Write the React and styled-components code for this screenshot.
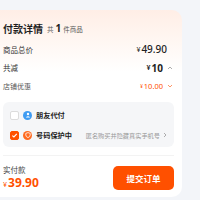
import React from "react";
import styled, { createGlobalStyle } from "styled-components";

const Global = createGlobalStyle`
  html, body { margin: 0; padding: 0; background: #f3f5f9; }
  body { font-family: "Noto Sans CJK SC", "Noto Sans", sans-serif; width: 200px; height: 200px; overflow: hidden; }
`;

const Card = styled.div`
  margin-top: 10px;
  width: 182px;
  height: 187px;
  box-sizing: border-box;
  padding: 8px 8px 0 3px;
  border-radius: 0 10px 10px 0;
  background: linear-gradient(180deg, #ffeee6 0px, #fff6f1 28px, #ffffff 62px);
  display: flex;
  flex-direction: column;
`;

const Header = styled.div`
  height: 20px;
  display: flex;
  align-items: center;
  gap: 4px;
  color: #1f1f1f;
  white-space: nowrap;
`;
const Title = styled.span`
  font-size: 10px;
  font-weight: 700;
`;
const Count = styled.span`
  font-size: 6.5px;
  color: #555;
  display: flex;
  align-items: baseline;
  gap: 2px;
  b { font-size: 10px; font-weight: 700; color: #222; font-family: "Noto Sans", sans-serif; }
`;

const Row = styled.div`
  height: ${p => p.$h || 19}px;
  display: flex;
  align-items: center;
  justify-content: space-between;
  padding-right: ${p => (p.$chev ? 1 : 7)}px;
  margin-top: ${p => p.$mt || 0}px;
  white-space: nowrap;
`;
const Label = styled.span`
  font-size: ${p => p.$size || 7.5}px;
  color: ${p => p.$color || "#333"};
`;
const Amount = styled.span`
  display: flex;
  align-items: center;
  font-size: ${p => p.$size || 10}px;
  font-weight: ${p => p.$w || 500};
  color: ${p => p.$color || "#222"};
  font-family: "Noto Sans", sans-serif;
  small { font-size: ${p => (p.$size || 10) - 3}px; margin-right: 1px; }
`;
const Chev = styled.svg`
  width: 6px;
  height: 6px;
  margin-left: 4px;
`;

const Box = styled.div`
  margin: 8px 0 0 0;
  background: #f5f6f8;
  border-radius: 6px;
  padding: 3px 0 2px 7px;
  display: flex;
  flex-direction: column;
`;
const OptRow = styled.div`
  height: 20px;
  display: flex;
  align-items: center;
  white-space: nowrap;
`;
const Check = styled.span`
  flex-shrink: 0;
  width: 9px;
  height: 9px;
  border-radius: 2px;
  box-sizing: border-box;
  border: 1px solid ${p => (p.$on ? "#ff5000" : "#dcdcdc")};
  background: ${p => (p.$on ? "#ff5000" : "#fff")};
  display: flex;
  align-items: center;
  justify-content: center;
`;
const Icon = styled.span`
  flex-shrink: 0;
  width: 9px;
  height: 9px;
  border-radius: 50%;
  background: ${p => p.$bg};
  margin-left: 4px;
  display: flex;
  align-items: center;
  justify-content: center;
`;
const OptText = styled.span`
  flex-shrink: 0;
  margin-left: 4px;
  font-size: 7.2px;
  font-weight: 700;
  color: #222;
`;
const Hint = styled.span`
  flex-shrink: 0;
  margin-left: auto;
  margin-right: 7px;
  font-size: 6.2px;
  color: #999;
  display: flex;
  align-items: center;
  gap: 3px;
`;
const Arrow = styled.svg`
  width: 4px;
  height: 6px;
`;

const Footer = styled.div`
  margin-top: 8px;
  border-top: 1px solid #f3f3f3;
  padding: 8px 0 0 0;
  display: flex;
  align-items: center;
  justify-content: space-between;
`;
const PayCol = styled.div`
  display: flex;
  flex-direction: column;
`;
const PayLabel = styled.span`
  font-size: 7.5px;
  color: #444;
  line-height: 11px;
`;
const PayAmount = styled.span`
  color: #ff5000;
  font-family: "Noto Sans", sans-serif;
  font-weight: 700;
  font-size: 12px;
  line-height: 15px;
  small { font-size: 7px; font-weight: 500; margin-right: 1px; }
`;
const Submit = styled.button`
  width: 61px;
  height: 24px;
  border: none;
  border-radius: 5px;
  background: #ff5000;
  color: #fff;
  font-family: "Noto Sans CJK SC", sans-serif;
  font-size: 8.5px;
  font-weight: 700;
  padding: 0;
`;

const Up = ({ color }) => (
  <Chev viewBox="0 0 6 6"><path d="M1 4 L3 2 L5 4" fill="none" stroke={color} strokeWidth="0.8" /></Chev>
);
const Down = ({ color }) => (
  <Chev viewBox="0 0 6 6"><path d="M1 2 L3 4 L5 2" fill="none" stroke={color} strokeWidth="0.8" /></Chev>
);

export default function App() {
  return (
    <>
      <Global />
      <Card>
        <Header>
          <Title>付款详情</Title>
          <Count>共<b>1</b>件商品</Count>
        </Header>
        <Row $mt={2} $h={18}>
          <Label>商品总价</Label>
          <Amount><small>¥</small>49.90</Amount>
        </Row>
        <Row $chev>
          <Label>共减</Label>
          <Amount $w={700}><small>¥</small>10<Up color="#999" /></Amount>
        </Row>
        <Row $chev $h={17}>
          <Label $size={7} $color="#555">店铺优惠</Label>
          <Amount $size={7.5} $w={400} $color="#ff5000"><small>¥</small>10.00<Down color="#ff7a40" /></Amount>
        </Row>
        <Box>
          <OptRow>
            <Check />
            <Icon $bg="#3f9cf2">
              <svg width="6" height="6" viewBox="0 0 6 6"><circle cx="3" cy="2" r="1.2" fill="#fff" /><path d="M0.8 5.5 Q3 2.8 5.2 5.5 Z" fill="#fff" /></svg>
            </Icon>
            <OptText>朋友代付</OptText>
          </OptRow>
          <OptRow>
            <Check $on>
              <svg width="7" height="7" viewBox="0 0 7 7"><path d="M1.3 3.6 L2.9 5 L5.8 1.9" fill="none" stroke="#fff" strokeWidth="1.1" /></svg>
            </Check>
            <Icon $bg="#ff6a1f">
              <svg width="6" height="6" viewBox="0 0 6 6"><path d="M3 0.6 L5.2 1.4 V3 Q5.2 4.8 3 5.6 Q0.8 4.8 0.8 3 V1.4 Z" fill="none" stroke="#fff" strokeWidth="0.8" /></svg>
            </Icon>
            <OptText>号码保护中</OptText>
            <Hint>
              匿名购买并隐藏真实手机号
              <Arrow viewBox="0 0 4 6"><path d="M1 1 L3 3 L1 5" fill="none" stroke="#999" strokeWidth="0.8" /></Arrow>
            </Hint>
          </OptRow>
        </Box>
        <Footer>
          <PayCol>
            <PayLabel>实付款</PayLabel>
            <PayAmount><small>¥</small>39.90</PayAmount>
          </PayCol>
          <Submit>提交订单</Submit>
        </Footer>
      </Card>
    </>
  );
}
